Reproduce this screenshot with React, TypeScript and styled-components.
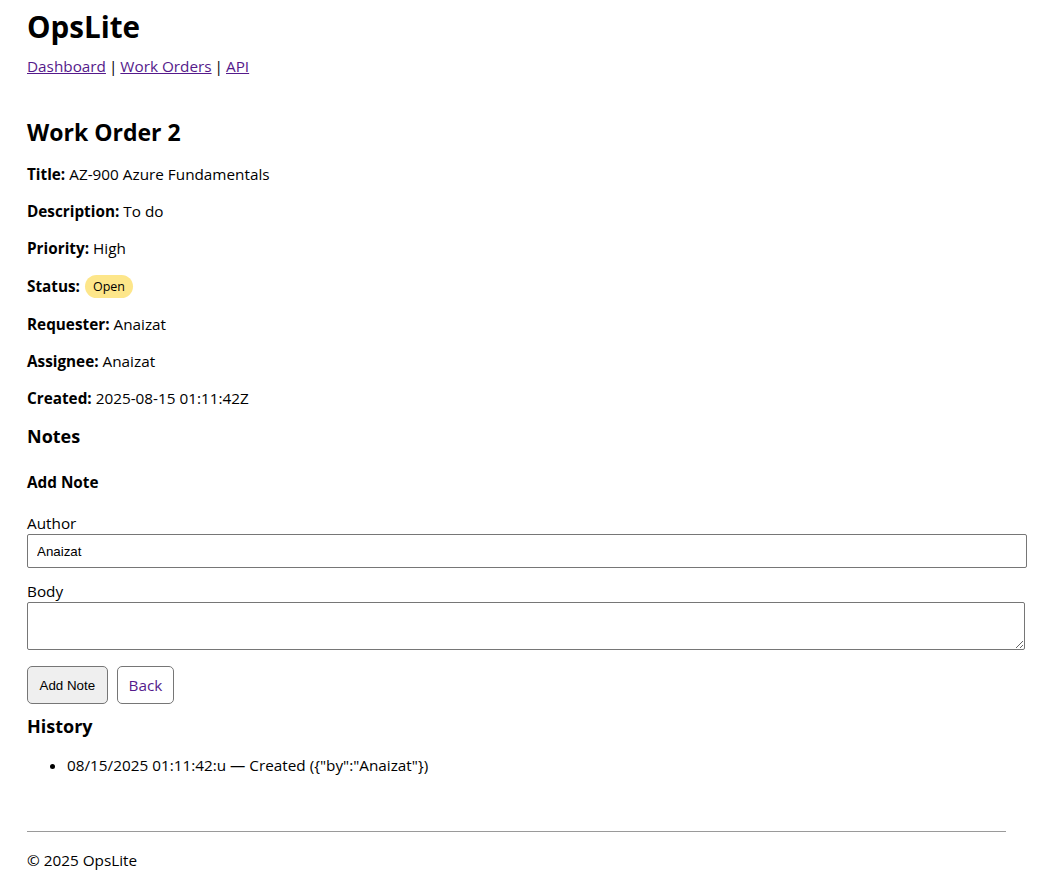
import React from "react";
import styled, { createGlobalStyle } from "styled-components";

const Global = createGlobalStyle`
  html, body { margin: 0; padding: 0; background: #fff; }
  body {
    font-family: "Open Sans", "Noto Sans", sans-serif;
    font-size: 15.3px;
    color: #000;
  }
  a { color: #551a8b; }
`;

const Page = styled.div`
  padding: 6px 0 0 27px;
  width: 1000px;
`;

const Header = styled.header`
  display: flex;
  flex-direction: column;
`;

const Brand = styled.h1`
  margin: 0;
  font-size: 29.6px;
  line-height: 42px;
  font-weight: 700;
`;

const Nav = styled.nav`
  margin-top: 8px;
  line-height: 21px;
`;

const Sep = styled.span`
  margin: 0 3px;
`;

const Main = styled.main`
  margin-top: 39px;
`;

const H2 = styled.h2`
  margin: 0 0 16px;
  font-size: 23px;
  line-height: 32px;
  font-weight: 700;
`;

const Field = styled.p`
  margin: 0 0 16px;
  line-height: 21px;
  display: flex;
  align-items: center;
  gap: 4px;
  min-height: 21px;
`;

const Label = styled.strong`
  font-weight: 700;
`;

const Pill = styled.span`
  display: inline-flex;
  align-items: center;
  justify-content: center;
  background: #fde68a;
  border-radius: 999px;
  height: 23px;
  padding: 0 8px;
  font-size: 12.5px;
  margin-left: 1px;
`;

const H3 = styled.h3<{ $top?: number }>`
  margin: ${(p) => p.$top ?? 0}px 0 0;
  font-size: 18px;
  line-height: 25px;
  font-weight: 700;
`;

const H4 = styled.h4`
  margin: 23px 0 0;
  font-size: 15.3px;
  line-height: 21px;
  font-weight: 700;
`;

const Form = styled.form`
  margin-top: 20px;
  display: flex;
  flex-direction: column;
`;

const FieldLabel = styled.label`
  display: block;
  line-height: 21px;
`;

const Input = styled.input`
  box-sizing: border-box;
  width: 1000px;
  height: 34px;
  margin: 0 0 13px;
  padding: 0 9px;
  border: 1px solid #767676;
  border-radius: 2px;
  font-family: Arial, "Liberation Sans", sans-serif;
  font-size: 13.33px;
  color: #000;
`;

const TextArea = styled.textarea`
  box-sizing: border-box;
  width: 998px;
  height: 48px;
  margin: 0;
  border: 1px solid #767676;
  border-radius: 2px;
  padding: 4px 9px;
  font-family: Arial, "Liberation Sans", sans-serif;
  font-size: 13.33px;
  resize: both;
`;

const Actions = styled.div`
  display: flex;
  gap: 9px;
  margin-top: 16px;
`;

const Button = styled.button<{ $link?: boolean }>`
  box-sizing: border-box;
  height: 38px;
  padding: 0 ${(p) => (p.$link ? "11px" : "11.5px")};
  border: 1px solid #767676;
  border-radius: 5px;
  background: ${(p) => (p.$link ? "#fff" : "#efefef")};
  color: ${(p) => (p.$link ? "#551a8b" : "#000")};
  font-family: ${(p) =>
    p.$link ? `"Open Sans", "Noto Sans", sans-serif` : `Arial, "Liberation Sans", sans-serif`};
  font-size: ${(p) => (p.$link ? "15.3px" : "13.33px")};
  cursor: pointer;
`;

const List = styled.ul`
  margin: 16px 0 0;
  padding-left: 40px;
  line-height: 21px;
`;

const Footer = styled.footer`
  margin-top: 55px;
`;

const Rule = styled.hr`
  margin: 0;
  width: 979px;
  border: none;
  border-top: 1px solid #9a9a9a;
`;

const FootText = styled.p`
  margin: 18px 0 0;
  line-height: 21px;
`;

export default function App() {
  return (
    <>
      <Global />
      <Page>
        <Header>
          <Brand>OpsLite</Brand>
          <Nav>
            <a href="#">Dashboard</a>
            <Sep>|</Sep>
            <a href="#">Work Orders</a>
            <Sep>|</Sep>
            <a href="#">API</a>
          </Nav>
        </Header>
        <Main>
          <H2>Work Order 2</H2>
          <Field>
            <Label>Title:</Label> AZ-900 Azure Fundamentals
          </Field>
          <Field>
            <Label>Description:</Label> To do
          </Field>
          <Field>
            <Label>Priority:</Label> High
          </Field>
          <Field>
            <Label>Status:</Label> <Pill>Open</Pill>
          </Field>
          <Field>
            <Label>Requester:</Label> Anaizat
          </Field>
          <Field>
            <Label>Assignee:</Label> Anaizat
          </Field>
          <Field>
            <Label>Created:</Label> 2025-08-15 01:11:42Z
          </Field>
          <H3 $top={-1}>Notes</H3>
          <H4>Add Note</H4>
          <Form onSubmit={(e) => e.preventDefault()}>
            <FieldLabel htmlFor="author">Author</FieldLabel>
            <Input id="author" defaultValue="Anaizat" />
            <FieldLabel htmlFor="body">Body</FieldLabel>
            <TextArea id="body" />
            <Actions>
              <Button type="submit">Add Note</Button>
              <Button type="button" $link>
                Back
              </Button>
            </Actions>
          </Form>
          <H3 $top={10}>History</H3>
          <List>
            <li>08/15/2025 01:11:42:u — Created ({'{"by":"Anaizat"}'})</li>
          </List>
        </Main>
        <Footer>
          <Rule />
          <FootText>© 2025 OpsLite</FootText>
        </Footer>
      </Page>
    </>
  );
}
